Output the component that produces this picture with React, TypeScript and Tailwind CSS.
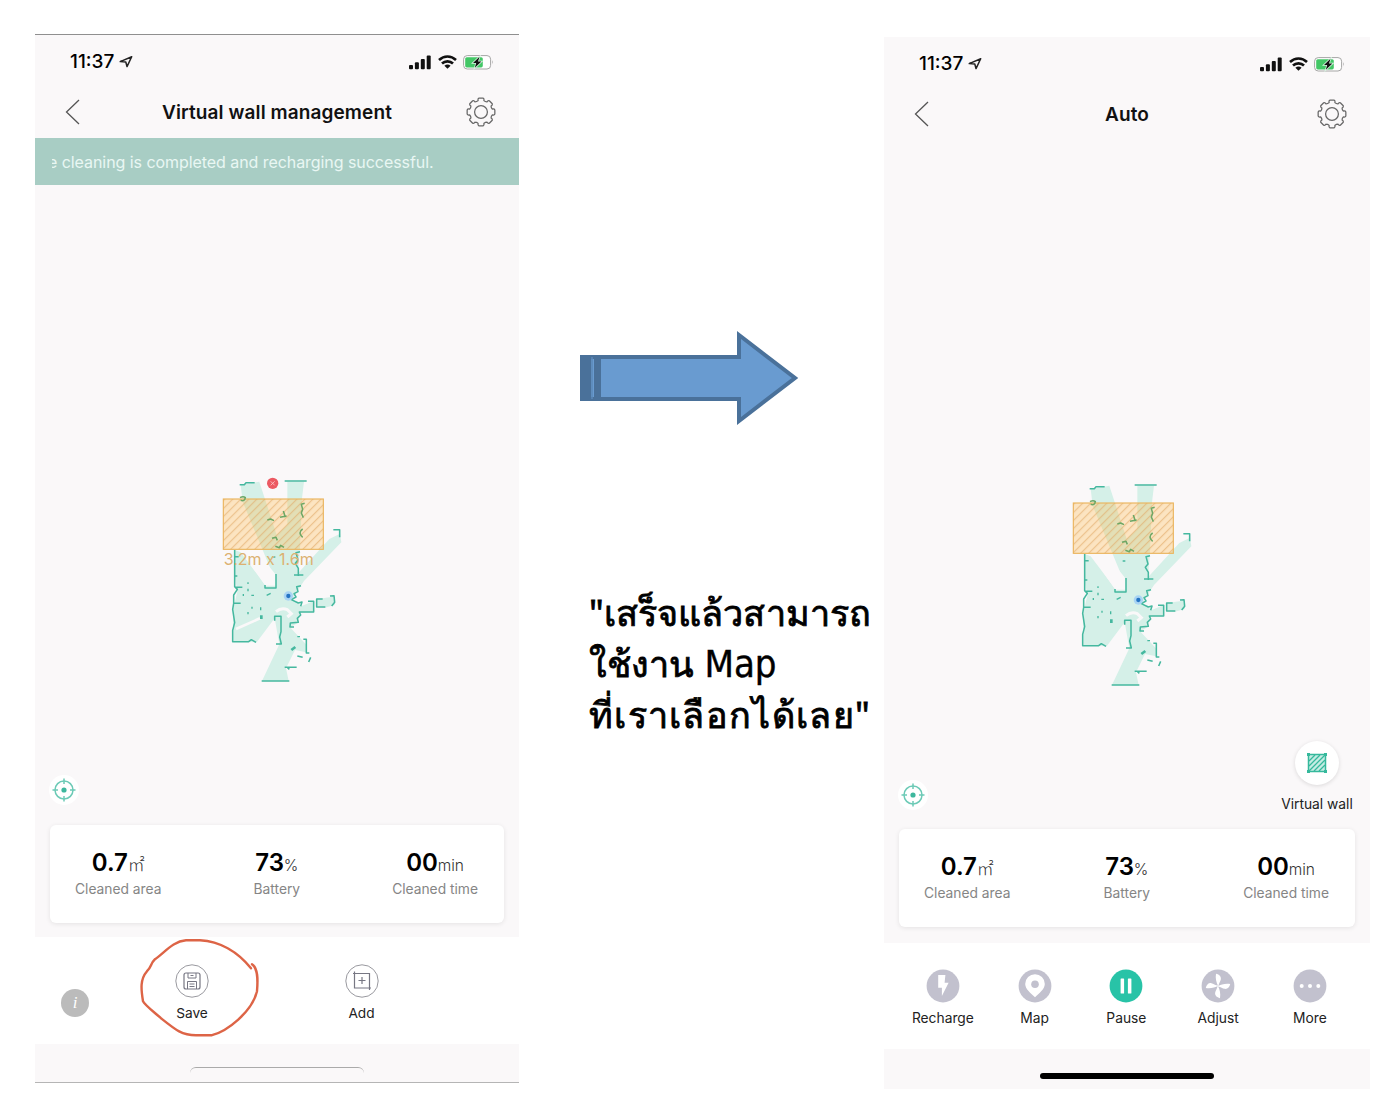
import React from "react";

function StatusBar() {
  return (
    <div className="flex h-[54px] items-center justify-between pl-[35px] pr-[25px]">
      <div className="flex items-center gap-[5px]">
        <span className="text-[19px] leading-6 font-medium text-black">11:37</span>
        <svg className="mb-px" width="14" height="13" viewBox="0 0 14 13" fill="none" stroke="#222" strokeWidth="1.5" strokeLinejoin="round">
          <path d="M12.7 1.8 L1.2 6.6 L6.8 7 L8 11.6 Z" />
        </svg>
      </div>
      <div className="flex items-center gap-[6px]">
        <svg width="23" height="15" viewBox="0 0 23 15" fill="#111">
          <rect x="0" y="10" width="4" height="4.3" rx="1" />
          <rect x="5.9" y="7.3" width="4" height="7" rx="1" />
          <rect x="11.8" y="4" width="4" height="10.3" rx="1" />
          <rect x="17.7" y="0.6" width="4" height="13.7" rx="1" />
        </svg>
        <svg width="19" height="14" viewBox="0 0 19 14" fill="none" stroke="#111" strokeWidth="2.6">
          <path d="M1 5 C6 0.4 13 0.4 18 5" />
          <path d="M4 8.5 C7 5.6 12 5.6 15 8.5" />
          <path d="M9.5 13.8 L6.4 10.8 Q9.5 8.4 12.6 10.8 Z" fill="#111" stroke="none" />
        </svg>
        <svg width="31" height="15" viewBox="0 0 31 15">
          <rect x="0.6" y="0.6" width="27" height="13.4" rx="3.6" fill="#fff" stroke="#a5a5a5" strokeWidth="1" />
          <rect x="2.2" y="2.2" width="17.6" height="10.2" rx="1.6" fill="#43c766" />
          <path d="M29.3 5 Q30.6 7.3 29.3 9.6 Z" fill="#888" />
          <path d="M16.5 1.8 L10 8 H13.2 L11.8 12.8 L18.4 6.6 H15 Z" fill="#111" stroke="#d8f5e1" strokeWidth="1.6" paintOrder="stroke" />
        </svg>
      </div>
    </div>
  );
}

function gearPath() {
  const pts: string[] = [];
  const n = 8;
  for (let i = 0; i < n; i++) {
    const a = (i * 2 * Math.PI) / n - Math.PI / 2;
    const at = (r: number, d: number) =>
      `${(15 + r * Math.cos(a + d)).toFixed(2)} ${(15 + r * Math.sin(a + d)).toFixed(2)}`;
    pts.push(`${i === 0 ? "M" : "L"}${at(11.7, -0.25)} Q${at(13.7, -0.26)} ${at(14, -0.15)} L${at(14, 0.15)} Q${at(13.7, 0.26)} ${at(11.7, 0.25)} Q${at(10.9, 0.39)} ${at(11.7, 0.53)}`);
  }
  return pts.join(" ") + "Z";
}

function Header({ title }: { title: string }) {
  return (
    <div className="grid h-[50px] grid-cols-[60px_1fr_60px] items-center">
      <svg className="mb-1 ml-[30px]" width="16" height="28" viewBox="0 0 16 28" fill="none" stroke="#555" strokeWidth="1.3">
        <path d="M14 2 L1.5 14 L14 26" />
      </svg>
      <h1 className="mb-[2px] text-center text-[19px] leading-6 font-semibold tracking-[0.1px] whitespace-nowrap text-[#111]">{title}</h1>
      <svg className="mb-1 ml-[7px]" width="30" height="30" viewBox="0 0 30 30" fill="none" stroke="#666" strokeWidth="1.25" strokeLinejoin="round">
        <path d={gearPath()} />
        <circle cx="15" cy="15" r="6.4" />
      </svg>
    </div>
  );
}

function FloorMap({ id, selected }: { id: string; selected?: boolean }) {
  return (
    <svg width="145" height="230" viewBox="0 0 435 690" fill="none">
      <defs>
        <pattern id={id} width="17" height="17" patternUnits="userSpaceOnUse" patternTransform="rotate(45)">
          <path d="M2 0 V17" stroke="#dfa762" strokeWidth="2" />
        </pattern>
      </defs>
      <g fill="#d5f0e8">
        <path d="M92 60 L148 50 L200 210 L232 180 L232 50 L282 50 L276 100 L270 250 L264 325 L358 222 L390 206 L394 232 L282 348 L258 385 L246 402 L275 423 L312 408 L310 440 L270 442 L262 475 L240 487 L290 540 L288 562 L255 555 L228 610 L236 648 L156 648 L208 538 L194 460 L140 532 L70 530 L70 430 L82 380 L74 330 L74 255 L92 262 L166 360 L198 352 L98 110 Z" />
        <path d="M320 402 L370 395 L374 420 L345 428 L320 422 Z" />
      </g>
      <path d="M92 255 L138 255 L198 330 V362 H166 Z" fill="#faf8f9" />
      {selected && <path d="M78 492 L150 460" stroke="#faf8f9" strokeWidth="8" />}
      <path d="M198 440 Q214 426 232 434 L244 446 L232 456" stroke="#faf8f9" strokeWidth="9" />
      <rect x="40" y="102" width="300" height="151" fill="#ffbf55" fillOpacity="0.34" />
      <rect x="40" y="102" width="300" height="151" fill={`url(#${id})`} stroke="#eab45c" strokeWidth="3.4" />
      <g stroke="#45b89f" strokeWidth="4.6" strokeLinejoin="round">
        <path d="M89 59 H103 L108 53 H134 M224 48 H290" />
        <path d="M370 194 H389 V217" />
        <path d="M74 255 V365 L82 373 L71 390 V415 H92 M71 415 L68 433 L74 473 L68 496 V530 H116 L124 524 L138 532 M74 275 H86 M76 367 H97" />
        <path d="M198 327 V369 H165 V360 M194 467 V454 H213 V500 L209 516 L214 537 H198" />
        <path d="M270 260 L258 263 L264 285 L256 295 L265 310 V333 M252 330 H280" />
        <path d="M273 362 L260 365 L264 380 L252 386 L258 396 L244 404 L265 414 L276 411 L272 424" />
        <path d="M294 409 H311 V441 H268 L272 450 L262 460 L265 472 L241 474 L240 486 H252" />
        <path d="M338 402 H320 V426 H346 M360 393 L372 392 L374 412 L365 423" />
        <path d="M280 523 H289 V564 H298 M262 573 L278 577 M302 577 L296 591 M224 607 H260 M232 607 L238 613 M155 648 H238" />
        <path d="M114 352 V357 M114 371 V379 M100 387 V393 M124 391 H132 M170 391 L182 385 M114 441 V448 M152 427 V436 M126 425 V431 M188 276 H196 M74 333 H82 M262 515 H270" strokeWidth="4" />
        <path d="M154 451 V462 M244 555 L256 546" strokeWidth="8" />
      </g>
      <g stroke="#6da765" strokeWidth="4.6" strokeLinejoin="round">
        <path d="M90 98 Q100 92 106 98 Q104 110 92 106" />
        <path d="M284 115 L274 118 L278 133 L274 144 L280 158" />
        <path d="M172 165 L182 162 L192 167 M210 157 L230 153 M220 138 L226 157 M278 192 Q262 203 278 217 M186 220 L198 217 L202 226 M196 244 L208 248 L212 241 L222 247" />
      </g>
      <circle cx="235" cy="393" r="14" fill="#a9d4f3" />
      <circle cx="235" cy="393" r="6.5" fill="#2474c4" />
      {selected && (
        <g>
          <circle cx="188" cy="55" r="17" fill="#ec5962" />
          <path d="M182 49 L194 61 M194 49 L182 61" stroke="#ffc7c9" strokeWidth="2.5" />
          <text x="41" y="299" fontSize="48" fill="#dcb171" textLength="270" fontFamily="Inter, sans-serif">3.2m x 1.6m</text>
        </g>
      )}
    </svg>
  );
}

function Locate() {
  return (
    <div className="flex size-[30px] items-center justify-center rounded-full bg-white">
      <svg width="26" height="26" viewBox="0 0 26 26" fill="none" stroke="#6ccab6" strokeWidth="1.5">
        <circle cx="13" cy="13" r="9" />
        <path d="M13 1.5 V7 M13 19 V24.5 M1.5 13 H7 M19 13 H24.5" />
        <circle cx="13" cy="13" r="2.6" fill="#3db79d" stroke="none" />
      </svg>
    </div>
  );
}

function Stat({ value, unit, label }: { value: string; unit: string; label: string }) {
  return (
    <div className="flex flex-col items-center whitespace-nowrap">
      <div className="flex h-[30px] items-baseline leading-[30px] text-black">
        <span className="text-[24px] font-semibold tracking-[-0.1px]">{value}</span>
        {unit === "㎡" ? (
          <span className="font-['Noto_Sans_CJK_JP',sans-serif] text-[17px] leading-[30px] font-light text-[#333]">{unit}</span>
        ) : (
          <span className="text-[15.5px] font-light text-[#333]">{unit}</span>
        )}
      </div>
      <div className="mt-[2px] text-[13.8px] leading-[18px] text-[#858585]">{label}</div>
    </div>
  );
}

function Stats() {
  return (
    <div className="mx-[15px] flex h-[98px] justify-between rounded-[6px] bg-white pt-[23px] pr-[26px] pl-[25px] shadow-[0_1px_5px_rgba(0,0,0,0.09)]">
      <Stat value="0.7" unit="㎡" label="Cleaned area" />
      <Stat value="73" unit="%" label="Battery" />
      <Stat value="00" unit="min" label="Cleaned time" />
    </div>
  );
}

function OutlineAction({ label, children }: { label: string; children: React.ReactNode }) {
  return (
    <div className="flex w-[60px] flex-col items-center">
      <svg width="34" height="34" viewBox="0 0 34 34" fill="none" stroke="#777783" strokeWidth="1.2">
        <circle cx="17" cy="17" r="16.2" stroke="#99999f" strokeWidth="1" />
        {children}
      </svg>
      <span className="mt-[6px] text-[13.7px] leading-[18px] text-[#222]">{label}</span>
    </div>
  );
}

function Action({ label, active, children }: { label: string; active?: boolean; children: React.ReactNode }) {
  return (
    <div className="flex w-[91.75px] flex-col items-center">
      <svg width="34" height="34" viewBox="0 0 34 34" fill="#fff">
        <circle cx="17" cy="17" r="16.4" fill={active ? "#28c3a7" : "#c2c1ce"} />
        {children}
      </svg>
      <span className="mt-[6px] text-[13.8px] leading-[18px] text-[#222]">{label}</span>
    </div>
  );
}

function WallManagement() {
  return (
    <section className="relative mt-[34px] flex h-[1049px] w-[484px] flex-col border-t border-b border-t-[#8f8f8f] border-b-[#b5b5b5] bg-[#faf8f9]">
      <StatusBar />
      <Header title="Virtual wall management" />
      <div className="-mt-px flex h-[47px] items-center bg-[#a8cdc4] pl-[17px]">
        <div className="w-[400px] overflow-hidden">
          <p className="-ml-[4px] text-[16px] leading-6 tracking-[-0.06px] whitespace-nowrap text-[#e9f7f3]">
            e cleaning is completed and recharging successful.
          </p>
        </div>
      </div>
      <div className="mt-[280px] ml-[175px]">
        <FloorMap id="hatch-left" selected />
      </div>
      <div className="mt-[80px] mb-[20px] ml-[14px]">
        <Locate />
      </div>
      <Stats />
      <div className="mt-[14px] flex h-[107px] bg-white pt-[27px]">
        <div className="mt-[25px] ml-[26px] flex size-[28px] items-center justify-center rounded-full bg-[#bbb] font-['Liberation_Serif',serif] text-[17px] text-white italic">i</div>
        <div className="ml-[73px]">
          <OutlineAction label="Save">
            <path d="M9 11 Q9 9 11 9 H23 Q25 9 25 11 V23 Q25 25 23 25 H11 Q9 25 9 23 Z" />
            <path d="M13 9 V14 H21 V9 M12.5 25 V17.5 H21.5 V25 M14.5 20 H19.5 M14.5 22.5 H19.5 M15.5 11.5 H18.5" strokeWidth="1" />
          </OutlineAction>
        </div>
        <div className="ml-[109.5px]">
          <OutlineAction label="Add">
            <path d="M9.5 7.5 V24 H26 M8 9.5 H24.5 V26 M17 13 V20 M13.5 16.5 H20.5" />
          </OutlineAction>
        </div>
      </div>
      <div className="mt-[23px] flex justify-center">
        <div className="h-[9px] w-[174px] rounded-t-[6px] border-t border-[#aaa]" />
      </div>
      <svg className="absolute top-[901px] left-[100px]" width="130" height="102" viewBox="0 0 130 102" fill="none" stroke="#dd6446" strokeWidth="2.4" strokeLinecap="round" strokeLinejoin="round">
        <path d="M116 33 C103 17 85 6 65 5 L51 5 C38 6 30 17 20 24 C15 29 17 31 12 36 C5 44 6 54 8 66 C10 70 18 76 26 83 C41 95 47 100 61 100 L77 100 C92 96 117 77 122 56 C123 44 123 33 117 29" transform="translate(0 -0.8)" />
      </svg>
    </section>
  );
}

function AutoMode() {
  return (
    <section className="mt-[37px] flex h-[1052px] w-[486px] flex-col bg-[#faf8f9]">
      <StatusBar />
      <Header title="Auto" />
      <div className="mt-[328px] ml-[176px]">
        <FloorMap id="hatch-right" />
      </div>
      <div className="mt-[42px] mb-[15px] flex h-[73px] justify-between pr-[16px] pl-[14px]">
        <div className="mt-[39px]">
          <Locate />
        </div>
        <div className="flex w-[74px] flex-col items-center">
          <div className="flex size-[44px] items-center justify-center rounded-full bg-white shadow-[0_1px_4px_rgba(0,0,0,0.13)]">
            <svg width="22" height="22" viewBox="0 0 22 22" fill="none" stroke="#35b99c" strokeWidth="1.5">
              <rect x="2.5" y="2.5" width="17" height="17" fill="#c5ece3" />
              <path d="M3 9 L9 3 M3 14 L14 3 M3 19 L19 3 M8 19 L19 8 M13 19 L19 13" strokeWidth="1.3" />
              <path d="M1 1 h3 v3 h-3z M18 1 h3 v3 h-3z M1 18 h3 v3 h-3z M18 18 h3 v3 h-3z" fill="#35b99c" stroke="none" />
            </svg>
          </div>
          <span className="mt-[10px] text-[13.8px] leading-[18px] whitespace-nowrap text-[#222]">Virtual wall</span>
        </div>
      </div>
      <Stats />
      <div className="mt-[16px] flex h-[106px] bg-white pt-[26px] pl-[13px]">
        <Action label="Recharge">
          <path d="M12.2 6 H19.4 L18.6 13.8 H22.6 L15.9 27 V18.8 H12.2 Z" />
        </Action>
        <Action label="Map">
          <path d="M17 28.3 C13 24.5 7.2 20 7.2 15 A9.8 9.8 0 0 1 26.8 15 C26.8 20 21 24.5 17 28.3 Z" />
          <circle cx="17" cy="15.2" r="3.8" fill="#c2c1ce" />
        </Action>
        <Action label="Pause" active>
          <rect x="11.6" y="9.5" width="3.5" height="15" rx="0.6" />
          <rect x="18.9" y="9.5" width="3.5" height="15" rx="0.6" />
        </Action>
        <Action label="Adjust">
          <g>
            {[0, 90, 180, 270].map((a) => (
              <path key={a} transform={`rotate(${a} 17 17)`} d="M17.4 17.4 C15.2 14 14.2 9 15 4.8 C18.2 5.4 20.4 7.6 19.8 10.4 C19.4 12.6 17.8 13.8 17.4 17.4 Z" />
            ))}
          </g>
        </Action>
        <Action label="More">
          <circle cx="8.7" cy="17" r="2" />
          <circle cx="17" cy="17" r="2" />
          <circle cx="25.3" cy="17" r="2" />
        </Action>
      </div>
      <div className="mt-[24px] flex justify-center">
        <div className="h-[6px] w-[174px] rounded-full bg-black" />
      </div>
    </section>
  );
}

export default function App() {
  return (
    <main className="flex h-[1118px] w-[1396px] overflow-hidden bg-white pl-[35px] font-['Inter','Liberation_Sans',sans-serif]">
      <WallManagement />
      <div className="flex w-[365px] flex-col">
        <svg className="mt-[328px] ml-[61px]" width="222" height="100" viewBox="0 0 222 100">
          <path d="M2 29 H159 V7 L215 50 L159 93 V71 H2 Z" fill="#699bd0" stroke="#4a719a" strokeWidth="4" />
          <path d="M0 27 H11 V73 H0 Z M14 29 H21 V71 H14 Z" fill="#4a719a" />
          <path d="M12 29 V71" stroke="#5b88b8" strokeWidth="1.5" />
        </svg>
        <div className="mt-[159px] ml-[70px] font-['Noto_Sans','DejaVu_Sans',sans-serif] text-[36px] leading-[51px] whitespace-nowrap text-black [-webkit-text-stroke:0.8px_black]">
          <p className="tracking-[0.1px]">"เสร็จแล้วสามารถ</p>
          <p>
            ใช้งาน <span className="ml-[1px] font-['DejaVu_Sans_Condensed','DejaVu_Sans',sans-serif] text-[38px] leading-[40px] [font-stretch:condensed] [-webkit-text-stroke:0.4px_black]">Map</span>
          </p>
          <p className="tracking-[1.3px]">ที่เราเลือกได้เลย"</p>
        </div>
      </div>
      <AutoMode />
    </main>
  );
}
